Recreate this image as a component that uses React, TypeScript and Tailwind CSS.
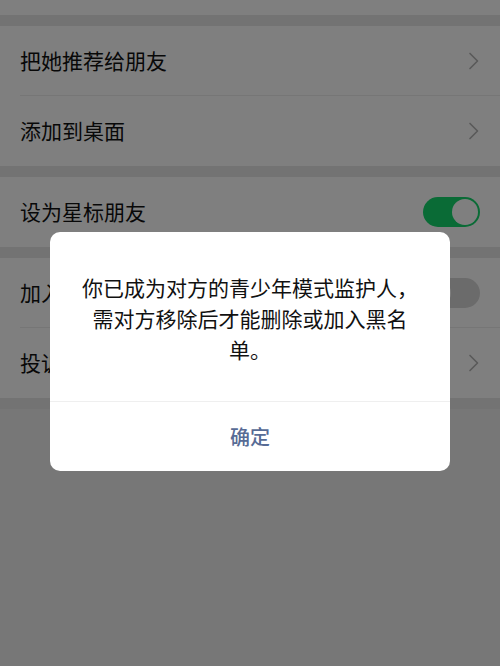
import React from 'react';

const Chevron = () => (
    <svg width="12" height="18" viewBox="0 0 12 18" fill="none" className="shrink-0">
        <polyline points="2,1.5 9.5,9 2,16.5" stroke="#b4b4b4" strokeWidth="1.7" strokeLinecap="round" strokeLinejoin="round" />
    </svg>
);

const Toggle = ({ on }: { on: boolean }) => (
    <div className={`relative w-[57px] h-[30px] rounded-full ${on ? 'bg-[#14d66c]' : 'bg-[#d6d6d6]'}`}>
        <div className={`absolute top-[2px] w-[26px] h-[26px] rounded-full bg-white ${on ? 'right-[2px]' : 'left-[2px]'}`}></div>
    </div>
);

const Row = ({ label, right, divider }: { label: string; right: React.ReactNode; divider?: boolean }) => (
    <div className="bg-white pl-5">
        <div className={`h-[70px] flex items-center justify-between pr-5 ${divider ? 'border-b border-[#ececec]' : ''}`}>
            <span className="text-[21px] text-[#111111]">{label}</span>
            {right}
        </div>
    </div>
);

const Band = () => <div className="h-[11px] bg-[#e6e6e6]"></div>;

export default function App() {
    return (
        <div
            className="relative w-[500px] h-[666px] overflow-hidden bg-[#eeeeee]"
            style={{ fontFamily: '"Noto Sans CJK SC", "Noto Sans", sans-serif' }}
        >
            <div className="flex flex-col">
                <div className="h-[15px] bg-white"></div>
                <Band />
                <Row label="把她推荐给朋友" right={<Chevron />} divider />
                <Row label="添加到桌面" right={<Chevron />} />
                <Band />
                <Row label="设为星标朋友" right={<Toggle on />} />
                <Band />
                <Row label="加入黑名单" right={<Toggle on={false} />} divider />
                <Row label="投诉" right={<Chevron />} />
                <Band />
            </div>

            {/* dim overlay + dialog */}
            <div className="absolute inset-0 bg-black/50 flex justify-center pt-[232px]">
                <div className="w-[400px] h-[239px] bg-white rounded-[10px] flex flex-col overflow-hidden">
                    <div className="flex-1 px-[24px] pt-[40px] text-center text-[21px] leading-[31px] text-[#111111]">
                        你已成为对方的青少年模式监护人，需对方移除后才能删除或加入黑名单。
                    </div>
                    <div className="h-[70px] border-t border-[#efefef] flex items-center justify-center">
                        <span className="text-[20px] font-medium text-[#576b95]">确定</span>
                    </div>
                </div>
            </div>
        </div>
    );
}
